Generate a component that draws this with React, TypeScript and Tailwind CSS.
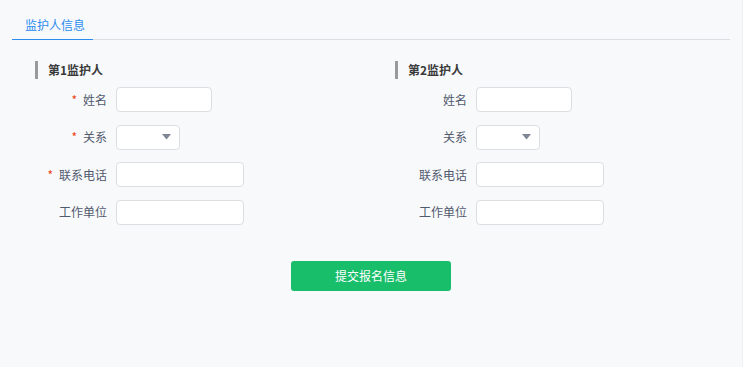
import React from 'react'

const font = { fontFamily: '"Noto Sans CJK SC", "Liberation Sans", sans-serif' }

type Field = { label: string; required?: boolean; kind: 'short' | 'select' | 'long' }

function Row({ f }: { f: Field }) {
  const box =
    f.kind === 'short' ? 'w-[96px]' : f.kind === 'select' ? 'w-[64px]' : 'w-[128px]'
  return (
    <div className="flex items-center h-[25px]">
      <div className="w-[72px] text-right text-[12px] text-[#515a6e] leading-none">
        {f.required && <span className="text-[#ed4014] mr-[6px]">*</span>}
        {f.label}
      </div>
      <div
        className={`ml-[9px] h-[25px] ${box} bg-white border border-[#dcdee2] rounded-[4px] flex items-center justify-end pr-[8px]`}
      >
        {f.kind === 'select' && (
          <svg width="9" height="6" viewBox="0 0 9 6">
            <path d="M0 0 L9 0 L4.5 5.5 Z" fill="#808695" />
          </svg>
        )}
      </div>
    </div>
  )
}

function Guardian({ title, req }: { title: string; req: boolean }) {
  const fields: Field[] = [
    { label: '姓名', required: req, kind: 'short' },
    { label: '关系', required: req, kind: 'select' },
    { label: '联系电话', required: req, kind: 'long' },
    { label: '工作单位', kind: 'long' },
  ]
  return (
    <div className="w-[360px] shrink-0">
      <div className="flex items-center h-[18px]">
        <div className="w-[3px] h-[18px] bg-[#9a9a9a]" />
        <span className="ml-[10px] text-[12px] font-bold text-[#3a3a3a]">{title}</span>
      </div>
      <div className="mt-[8px] flex flex-col gap-[12.5px]">
        {fields.map(f => (
          <Row key={f.label} f={f} />
        ))}
      </div>
    </div>
  )
}

export default function App() {
  return (
    <div className="flex h-screen w-full bg-white" style={font}>
      <div className="w-[743px] h-full shrink-0 bg-[#f8f9fb] border-r border-[#eef0f3]">
        {/* Tabs */}
        <div className="mx-[12px] pt-[10px] border-b border-[#dcdee2] flex">
          <div className="w-[81px] h-[30px] -mb-px border-b border-[#2d8cf0] flex items-center pl-[13px] text-[12px] text-[#2d8cf0]">
            监护人信息
          </div>
        </div>

        {/* Guardians */}
        <div className="flex pl-[35px] mt-[21px]">
          <Guardian title="第1监护人" req={true} />
          <Guardian title="第2监护人" req={false} />
        </div>

        <div className="flex justify-center mt-[36px]">
          <button className="w-[160px] h-[30px] rounded-[3px] bg-[#19be6b] text-white text-[12px]">
            提交报名信息
          </button>
        </div>
      </div>
    </div>
  )
}
